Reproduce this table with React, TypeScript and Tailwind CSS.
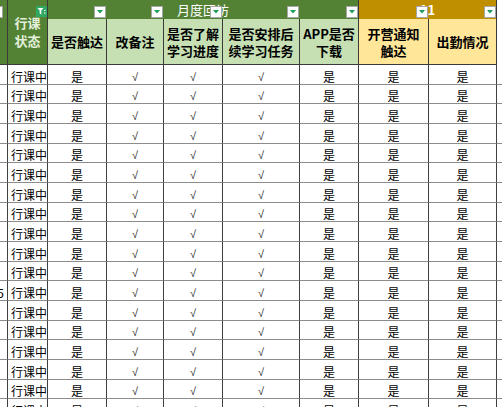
import React from 'react';

const cols = 'grid grid-cols-[8px_40px_59px_57px_59px_77px_59px_70px_68px_5px]';
const font = { fontFamily: '"Noto Sans CJK SC", "Noto Sans", sans-serif' };

// one data row: 行课状态 + the seven answer columns
const values = ['是', '√', '√', '√', '是', '是', '是'];

function FilterButton() {
  return (
    <div className="w-3 h-3 bg-white border border-[#a6a6a6] flex items-center justify-center">
      <svg width="6" height="4" viewBox="0 0 6 4">
        <path d="M0 0 H6 L3 3.5 Z" fill="#1e9e5a" />
      </svg>
    </div>
  );
}

function FilterApplied() {
  return (
    <div className="w-[11px] h-[11px] bg-[#2fa862] flex items-center justify-center">
      <svg width="9" height="9" viewBox="0 0 9 9">
        <path d="M0.5 1 H6.5 L4.3 3.6 V7.5 L2.7 6.6 V3.6 Z" fill="#fff" />
        <rect x="7" y="3" width="1.5" height="1" fill="#fff" />
        <rect x="7" y="5.5" width="1.5" height="1" fill="#fff" />
      </svg>
    </div>
  );
}

function Header() {
  return (
    <div className="relative">
      <div className={`${cols} grid-rows-[19px_46px]`}>
        <div className="row-span-2 bg-[#548235] border-r border-b border-[#3a3a3a]" />
        <div className="row-span-2 bg-[#548235] border-r border-b border-[#3a3a3a] flex items-center justify-center text-center text-[13px] font-bold leading-[18px] text-[#e2efda]">
          行课<br />状态
        </div>
        <div className="col-span-5 bg-[#548235] border-r border-[#3a3a3a] flex items-center justify-center text-[13px] text-white">
          月度回访
        </div>
        <div className="col-span-2 bg-[#bf8f00] border-r border-[#3a3a3a] flex items-center justify-center text-[13px] font-bold text-white">
          11
        </div>
        <div className="row-span-2 bg-white" />
        {[
          ['是否触达'],
          ['改备注'],
          ['是否了解', '学习进度'],
          ['是否安排后', '续学习任务'],
          ['APP是否', '下载'],
        ].map((t, i) => (
          <div key={i} className="bg-[#c6e0b4] border-r border-b border-[#3a3a3a] flex flex-col items-center justify-center text-[13px] font-bold leading-[17px] text-black">
            {t.map((l) => <span key={l}>{l}</span>)}
          </div>
        ))}
        {[['开营通知', '触达'], ['出勤情况']].map((t, i) => (
          <div key={i} className="bg-[#ffe699] border-r border-b border-[#3a3a3a] flex flex-col items-center justify-center text-[13px] font-bold leading-[17px] text-black">
            {t.map((l) => <span key={l}>{l}</span>)}
          </div>
        ))}
      </div>
      {/* filter dropdown buttons sit over the first header row */}
      <div className={`${cols} absolute top-0 left-0 right-0 h-[19px]`}>
        <div className="flex items-end pb-px overflow-hidden">
          <div className="-ml-[9px]"><FilterButton /></div>
        </div>
        <div className="flex items-end justify-end pb-[2px] pr-px"><FilterApplied /></div>
        {[0, 1, 2, 3, 4, 5, 6].map((i) => (
          <div key={i} className="flex items-end justify-end pb-px pr-px"><FilterButton /></div>
        ))}
        <div />
      </div>
    </div>
  );
}

function Row({ index }: { index: number }) {
  const h = index % 3 === 1 ? 'h-[19px]' : 'h-5';
  return (
    <div className={`${cols} ${h} text-[12px] leading-[14px] text-black`}>
      <div className="border-r border-b border-r-[#3f3f3f] border-b-[#8c8c8c] flex items-end justify-end overflow-hidden pr-[3px]">
        {index === 11 ? '5' : ''}
      </div>
      <div className="border-r border-b border-r-[#3f3f3f] border-b-[#8c8c8c] flex items-end pl-[3px]">行课中</div>
      {values.map((v, i) => (
        <div
          key={i}
          className={`border-r border-b border-r-[#3f3f3f] border-b-[#8c8c8c] flex items-end justify-center ${
            v === '√' ? "font-['Liberation_Sans'] text-[11px] text-[#222]" : ''
          }`}
        >
          {v}
        </div>
      ))}
      <div className="border-b border-[#8c8c8c]" />
    </div>
  );
}

export default function App() {
  return (
    <div className="w-[502px] h-[407px] overflow-hidden bg-white" style={font}>
      <Header />
      {Array.from({ length: 18 }, (_, i) => (
        <Row key={i} index={i} />
      ))}
    </div>
  );
}
